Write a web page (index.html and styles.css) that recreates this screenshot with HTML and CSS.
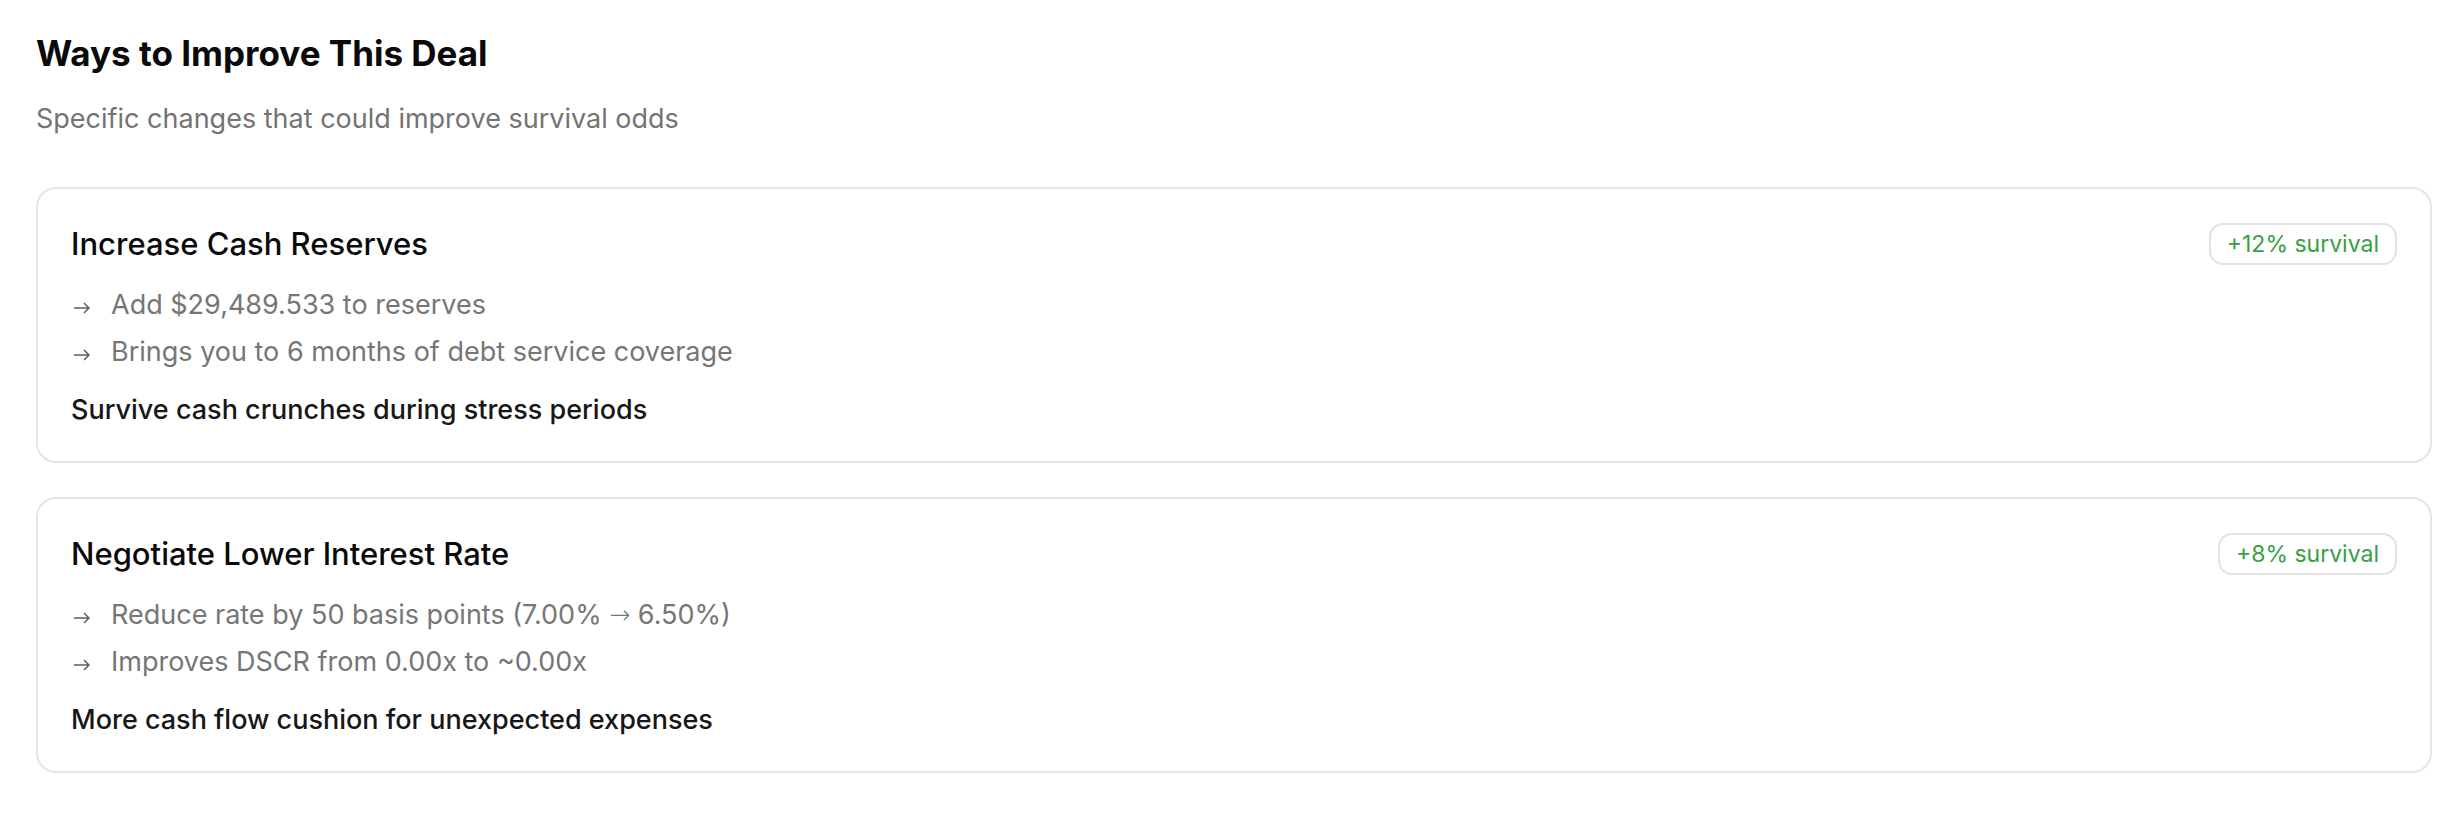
FILE: index.html
```html
<!DOCTYPE html>
<html lang="en">
<head>
  <meta charset="UTF-8">
  <meta name="viewport" content="width=device-width, initial-scale=1.0">
  <title>Ways to Improve This Deal</title>
  <link rel="stylesheet" href="styles.css">
</head>
<body>

  <section class="improve">
    <header class="improve-head">
      <h2>Ways to Improve This Deal</h2>
      <p>Specific changes that could improve survival odds</p>
    </header>

    <div class="suggestions">
      <article class="suggestion">
        <div class="suggestion-top">
          <h3>Increase Cash Reserves</h3>
          <span class="badge">+12% survival</span>
        </div>
        <ul class="steps">
          <li><svg class="arrow" viewBox="0 0 17 12"><path d="M1 6h15M11 1l5 5-5 5"/></svg>Add $29,489.533 to reserves</li>
          <li><svg class="arrow" viewBox="0 0 17 12"><path d="M1 6h15M11 1l5 5-5 5"/></svg>Brings you to 6 months of debt service coverage</li>
        </ul>
        <p class="impact">Survive cash crunches during stress periods</p>
      </article>

      <article class="suggestion">
        <div class="suggestion-top">
          <h3>Negotiate Lower Interest Rate</h3>
          <span class="badge">+8% survival</span>
        </div>
        <ul class="steps">
          <li><svg class="arrow" viewBox="0 0 17 12"><path d="M1 6h15M11 1l5 5-5 5"/></svg>Reduce rate by 50 basis points (7.00%&nbsp;<span class="to">&rarr;</span>&nbsp;6.50%)</li>
          <li><svg class="arrow" viewBox="0 0 17 12"><path d="M1 6h15M11 1l5 5-5 5"/></svg>Improves DSCR from 0.00x to ~0.00x</li>
        </ul>
        <p class="impact">More cash flow cushion for unexpected expenses</p>
      </article>
    </div>
  </section>

</body>
</html>
```

FILE: styles.css
```css
* {
  margin: 0;
  padding: 0;
  box-sizing: border-box;
}

body {
  font-family: Inter, "Noto Sans", sans-serif;
  background-color: #ffffff;
  color: #0a0a0a;
  padding: 32px 28px 36px 36px;
}

.improve-head h2 {
  font-size: 35px;
  line-height: 42px;
  font-weight: 700;
  color: #0a0a0a;
}

.improve-head p {
  margin-top: 27px;
  font-size: 27px;
  line-height: 36px;
  color: #737373;
}

.suggestions {
  margin-top: 50px;
  display: flex;
  flex-direction: column;
  gap: 34px;
}

.suggestion {
  border: 2px solid #e5e5e5;
  border-radius: 20px;
  padding: 32px 33px 30px;
}

.suggestion-top {
  display: flex;
  justify-content: space-between;
  align-items: center;
}

.suggestion-top h3 {
  font-size: 31px;
  line-height: 45px;
  font-weight: 500;
  color: #0a0a0a;
}

.badge {
  border: 2px solid #e2e2e2;
  border-radius: 14px;
  padding: 0 16px;
  height: 42px;
  display: flex;
  align-items: center;
  font-size: 23px;
  font-weight: 400;
  color: #36a046;
}

.steps {
  list-style: none;
  margin-top: 15px;
}

.steps li {
  font-size: 27px;
  line-height: 47px;
  height: 47px;
  color: #767676;
  display: flex;
  align-items: center;
}

.arrow {
  width: 17px;
  height: 12px;
  margin: 6px 21px 0 2px;
  flex-shrink: 0;
  fill: none;
  stroke: #5e5e5e;
  stroke-width: 1.5;
}

.to {
  font-family: "DejaVu Sans", sans-serif;
  font-weight: 200;
  font-size: 25px;
  line-height: 1;
}

.impact {
  margin-top: 14px;
  font-size: 27px;
  line-height: 42px;
  font-weight: 500;
  color: #171717;
}
```
